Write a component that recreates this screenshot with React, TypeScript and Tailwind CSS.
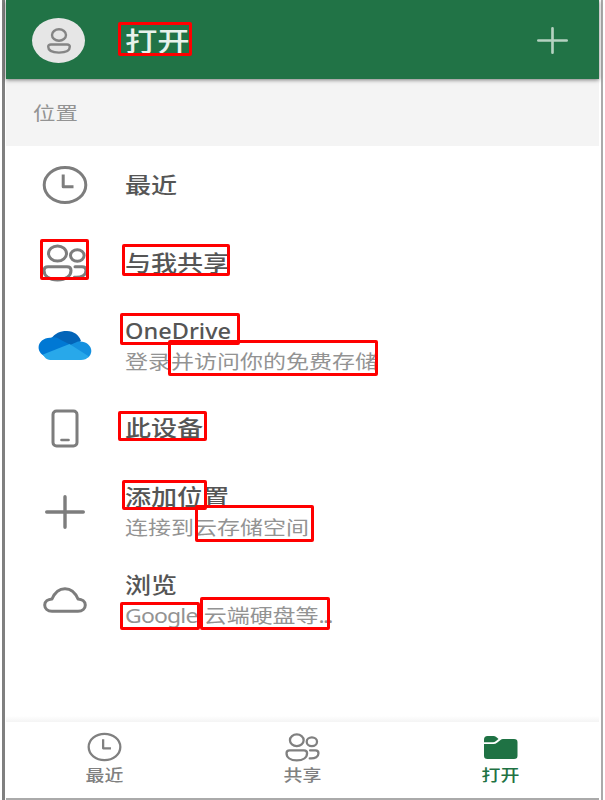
import React from "react";

type IconProps = { className?: string };

const stroke = {
  fill: "none",
  stroke: "currentColor",
  strokeLinecap: "round" as const,
  strokeLinejoin: "round" as const,
};

function Clock({ className }: IconProps) {
  return (
    <svg className={className} viewBox="0 0 46 40" preserveAspectRatio="none" {...stroke} strokeWidth="3">
      <ellipse cx="23" cy="20" rx="20.800" ry="17.500" />
      <path d="M21.200 9.500V21.700H31.500" strokeLinecap="butt" />
    </svg>
  );
}

function People({ className }: IconProps) {
  return (
    <svg className={className} viewBox="0 0 46 38" preserveAspectRatio="none" {...stroke} strokeWidth="3">
      <ellipse cx="15.500" cy="9.500" rx="9" ry="7.600" />
      <ellipse cx="35.300" cy="11.500" rx="6.800" ry="5.800" />
      <path d="M6 22.800H25Q29 22.800 29 26.500C29 32 24 35.900 15.500 35.900S2 32 2 26.500Q2 22.800 6 22.800Z" />
      <path d="M33 22.800H40Q44 22.800 44 26.500C44 31 40 33.700 32.500 33.200" />
    </svg>
  );
}

function OneDrive() {
  return (
    <svg className="h-[31px] w-[54px]" viewBox="0 0 54 31">
      <path d="M13 9C17 3 23 .8 29 1C36 1.200 41 5 43 11L32 18Z" fill="#0364b8" />
      <path d="M7 26.500C2.500 24 .5 21 .6 17C.8 12 6 7.500 12.500 7.800C17 6.500 20 8 23 10L33 15L30 20Z" fill="#0078d4" />
      <path d="M32 15L40 11.600C47 10.500 53.300 15 53.300 21C53.300 23.500 52 26 50 27.500L34 22Z" fill="#1490df" />
      <path d="M5 24.500L31.500 14L51 26.500C49 29 46 30 43 30H12C9 30 6.500 27.500 5 24.500Z" fill="#28a8ea" />
    </svg>
  );
}

function Phone() {
  return (
    <svg className="h-[39px] w-7" viewBox="0 0 28 39" {...stroke} strokeWidth="3">
      <rect x="2" y="2" width="24" height="35" rx="3.500" />
      <path d="M10.500 31H17.500" strokeWidth="2.600" />
    </svg>
  );
}

function Plus({ className }: IconProps) {
  return (
    <svg className={className} viewBox="0 0 40 34" preserveAspectRatio="none" {...stroke} strokeWidth="3.400">
      <path d="M1.700 17H38.300M20 1.700V32.300" />
    </svg>
  );
}

function Cloud() {
  return (
    <svg className="h-[26px] w-11" viewBox="0 0 44 26" {...stroke} strokeWidth="3">
      <path d="M9 24.300H35C39.500 24.300 42.300 21.500 42.300 18C42.300 14.500 39 12.300 35 12C32 5 28.500 1.700 22 1.700S12 5 9 12C5 12.300 1.700 14.500 1.700 18C1.700 21.500 4.500 24.300 9 24.300Z" />
    </svg>
  );
}

function Folder() {
  return (
    <svg className="h-[25px] w-[35px]" viewBox="0 0 35 25" fill="#1f7244">
      <path d="M1 7.200V4.500Q1 1 4.500 1H10.500Q12 1 13.200 2L15.500 4L13 6Q11.500 7.200 10 7.200Z" />
      <path d="M1 9H10.500Q12.500 9 14 7.800L17.500 4.900Q18.500 4 20 4H31Q34.500 4 34.500 7.200V20.700Q34.500 24 31 24H4.500Q1 24 1 20.700Z" />
    </svg>
  );
}

function Title({ children, latin }: { children: React.ReactNode; latin?: boolean }) {
  return (
    <span className={`block h-[31px] origin-left text-[21.200px] leading-[30px] font-medium text-[#555] ${latin ? "scale-x-[1.11]" : "scale-x-[1.230]"}`}>
      {children}
    </span>
  );
}

function Sub({ children }: { children: React.ReactNode }) {
  return <span className="block h-[31px] origin-left scale-x-[1.210] text-[19px] leading-[31px] text-[#939393]">{children}</span>;
}

function Row({ icon, height, double, children }: { icon: React.ReactNode; height: string; double?: boolean; children: React.ReactNode }) {
  return (
    <div className={`flex items-center ${height}`}>
      <div className="flex w-[118px] shrink-0 justify-center text-[#7d7d7d]">{icon}</div>
      <div className={`ml-px whitespace-nowrap ${double ? "pt-0.5" : ""}`}>{children}</div>
    </div>
  );
}

function Tab({ icon, label, active }: { icon: React.ReactNode; label: string; active?: boolean }) {
  return (
    <div className={`flex flex-1 flex-col items-center pt-[9px] font-medium ${active ? "text-[#1f7244]" : "text-[#808080]"}`}>
      <div className="flex h-8 items-center">{icon}</div>
      <span className="scale-x-[1.220] text-[15.500px] leading-[24px]">{label}</span>
    </div>
  );
}

const marks = [
  "left-[118px] top-[22px] w-[74px] h-[34px]",
  "left-[40px] top-[239px] w-[49px] h-[41px]",
  "left-[122px] top-[244px] w-[108px] h-[32px]",
  "left-[120px] top-[313px] w-[120px] h-[32px]",
  "left-[168px] top-[340px] w-[210px] h-[36px]",
  "left-[118px] top-[411px] w-[89px] h-[30px]",
  "left-[122px] top-[480px] w-[85px] h-[30px]",
  "left-[195px] top-[505px] w-[119px] h-[37px]",
  "left-[120px] top-[602px] w-[80px] h-[28px]",
  "left-[200px] top-[597px] w-[130px] h-[33px]",
];

export default function App() {
  return (
    <div className="relative h-[800px] w-[605px] overflow-hidden bg-white px-0.5 font-['Noto_Sans','Noto_Sans_CJK_SC',sans-serif]">
      <div className="flex h-[800px] flex-col border-l-[3px] border-r-2 border-l-[#808080] border-r-[#aaa] pr-0.5 pl-px">
        <header className="z-10 flex h-[79px] shrink-0 items-center bg-[#217346] pt-0.5 pr-[31px] pl-[26px] shadow-[0_1px_4px_rgba(0,0,0,0.5)]">
          <div className="flex h-[45px] w-[53px] items-center justify-center rounded-[50%] bg-[#e6e6e6] text-[#858585]">
            <svg className="h-[26px] w-6" viewBox="0 0 24 26" {...stroke} strokeWidth="2.400">
              <ellipse cx="12" cy="7" rx="7" ry="5.700" />
              <path d="M4 16.500H20Q22.800 16.500 22.800 18.800C22.800 22.500 18.500 24.600 12 24.600S1.200 22.500 1.200 18.800Q1.200 16.500 4 16.500Z" />
            </svg>
          </div>
          <span className="ml-10 origin-left scale-x-[1.230] text-[26.300px] leading-9 font-medium text-[#e8f2ec]">打开</span>
          <Plus className="ml-auto h-[27px] w-[31px] text-[#b5d2c1]" />
        </header>
        <div className="flex h-[67px] shrink-0 items-center bg-[#f4f4f4] pl-[27px]">
          <span className="origin-left scale-x-[1.210] text-[18.500px] text-[#939393]">位置</span>
        </div>
        <main className="flex-1">
          <Row height="h-[78px]" icon={<Clock className="h-10 w-[46px]" />}><Title>最近</Title></Row>
          <Row height="h-[78px]" icon={<People className="h-[38px] w-[46px]" />}><Title>与我共享</Title></Row>
          <Row double height="h-[87px]" icon={<OneDrive />}><Title latin>OneDrive</Title><Sub>登录并访问你的免费存储</Sub></Row>
          <Row height="h-[79px]" icon={<Phone />}><Title>此设备</Title></Row>
          <Row double height="h-[87px]" icon={<Plus className="h-[34px] w-10" />}><Title>添加位置</Title><Sub>连接到云存储空间</Sub></Row>
          <Row double height="h-[90px]" icon={<Cloud />}><Title>浏览</Title><Sub><span className="inline-block w-[65px] tracking-[-0.7px]">Google</span>云端硬盘等<span className="tracking-[-1.500px]">...</span></Sub></Row>
        </main>
        <div className="h-1.5 shrink-0 bg-linear-to-b from-white to-[#f4f4f4]" />
        <nav className="flex h-[78px] shrink-0 border-b-2 border-b-[#aaa]">
          <Tab icon={<Clock className="h-[30px] w-[35px]" />} label="最近" />
          <Tab icon={<People className="h-[29px] w-[35px]" />} label="共享" />
          <Tab active icon={<Folder />} label="打开" />
        </nav>
      </div>
      {marks.map((m) => (
        <div key={m} className={`absolute z-20 rounded-[2px] border-[3px] border-[#ff0000] ${m}`} />
      ))}
    </div>
  );
}
